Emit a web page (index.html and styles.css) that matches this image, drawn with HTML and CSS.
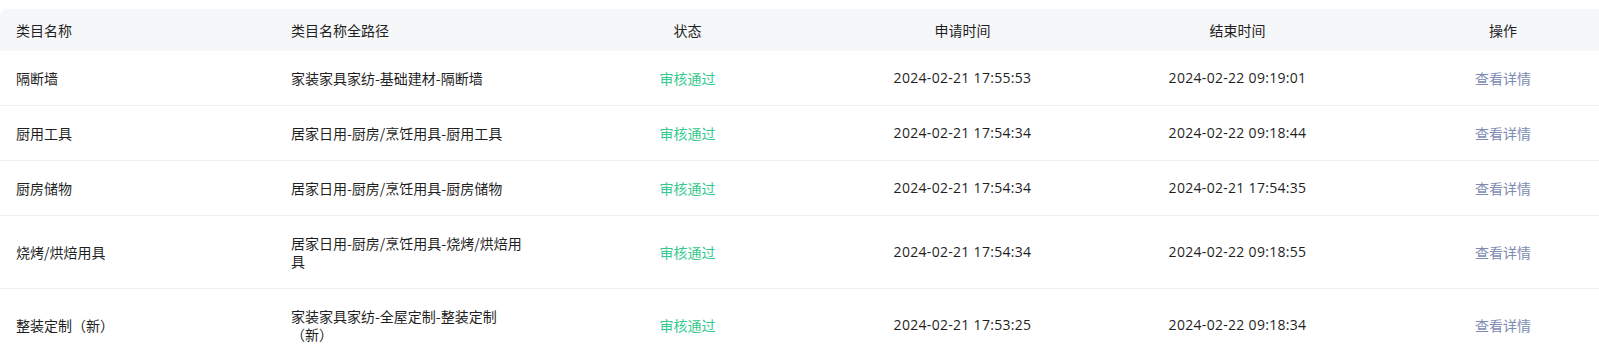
FILE: index.html
```html
<!DOCTYPE html>
<html lang="zh-CN">
<head>
<meta charset="utf-8">
<title>类目列表</title>
<link rel="stylesheet" href="styles.css">
</head>
<body>
<div class="table">
  <div class="row head">
    <div class="cell c1">类目名称</div>
    <div class="cell c2">类目名称全路径</div>
    <div class="cell c3">状态</div>
    <div class="cell c4">申请时间</div>
    <div class="cell c5">结束时间</div>
    <div class="cell c6">操作</div>
  </div>
  <div class="row">
    <div class="cell c1">隔断墙</div>
    <div class="cell c2">家装家具家纺-基础建材-隔断墙</div>
    <div class="cell c3 ok">审核通过</div>
    <div class="cell c4 num">2024-02-21 17:55:53</div>
    <div class="cell c5 num">2024-02-22 09:19:01</div>
    <div class="cell c6"><a class="link">查看详情</a></div>
  </div>
  <div class="row">
    <div class="cell c1">厨用工具</div>
    <div class="cell c2">居家日用-厨房/烹饪用具-厨用工具</div>
    <div class="cell c3 ok">审核通过</div>
    <div class="cell c4 num">2024-02-21 17:54:34</div>
    <div class="cell c5 num">2024-02-22 09:18:44</div>
    <div class="cell c6"><a class="link">查看详情</a></div>
  </div>
  <div class="row">
    <div class="cell c1">厨房储物</div>
    <div class="cell c2">居家日用-厨房/烹饪用具-厨房储物</div>
    <div class="cell c3 ok">审核通过</div>
    <div class="cell c4 num">2024-02-21 17:54:34</div>
    <div class="cell c5 num">2024-02-21 17:54:35</div>
    <div class="cell c6"><a class="link">查看详情</a></div>
  </div>
  <div class="row">
    <div class="cell c1">烧烤/烘焙用具</div>
    <div class="cell c2">居家日用-厨房/烹饪用具-烧烤/烘焙用具</div>
    <div class="cell c3 ok">审核通过</div>
    <div class="cell c4 num">2024-02-21 17:54:34</div>
    <div class="cell c5 num">2024-02-22 09:18:55</div>
    <div class="cell c6"><a class="link">查看详情</a></div>
  </div>
  <div class="row">
    <div class="cell c1">整装定制（新）</div>
    <div class="cell c2">家装家具家纺-全屋定制-整装定制（新）</div>
    <div class="cell c3 ok">审核通过</div>
    <div class="cell c4 num">2024-02-21 17:53:25</div>
    <div class="cell c5 num">2024-02-22 09:18:34</div>
    <div class="cell c6"><a class="link">查看详情</a></div>
  </div>
</div>
</body>
</html>
```
FILE: styles.css
```css
html, body {
  margin: 0;
  padding: 0;
  background: #ffffff;
}
body {
  font-family: "Noto Sans CJK SC", "Noto Sans", sans-serif;
  font-size: 14px;
  color: #1f1f1f;
  overflow: hidden;
}
.table {
  margin-top: 9px;
  width: 1599px;
}
.row {
  display: grid;
  grid-template-columns: 275px 275px 275px 275px 275px 224px;
  align-items: center;
  border-bottom: 1px solid #efefef;
}
.row.head {
  background: #f6f7f9;
  border-bottom: none;
  border-top-left-radius: 8px;
}
.cell {
  padding: 18px 16px;
  line-height: 18px;
  box-sizing: border-box;
}
.head .cell {
  padding-top: 12px;
  padding-bottom: 12px;
}
.c3, .c4, .c5, .c6 {
  text-align: center;
}
.c2 {
  padding-right: 24px;
}
.c6 {
  padding-left: 32px;
  padding-right: 0;
}
.num {
  font-family: "Open Sans", "Noto Sans", sans-serif;
  font-size: 14px;
  letter-spacing: 0.3px;
}
.ok {
  color: #36c98f;
}
.link {
  color: #7d8bb3;
  cursor: pointer;
}
```
